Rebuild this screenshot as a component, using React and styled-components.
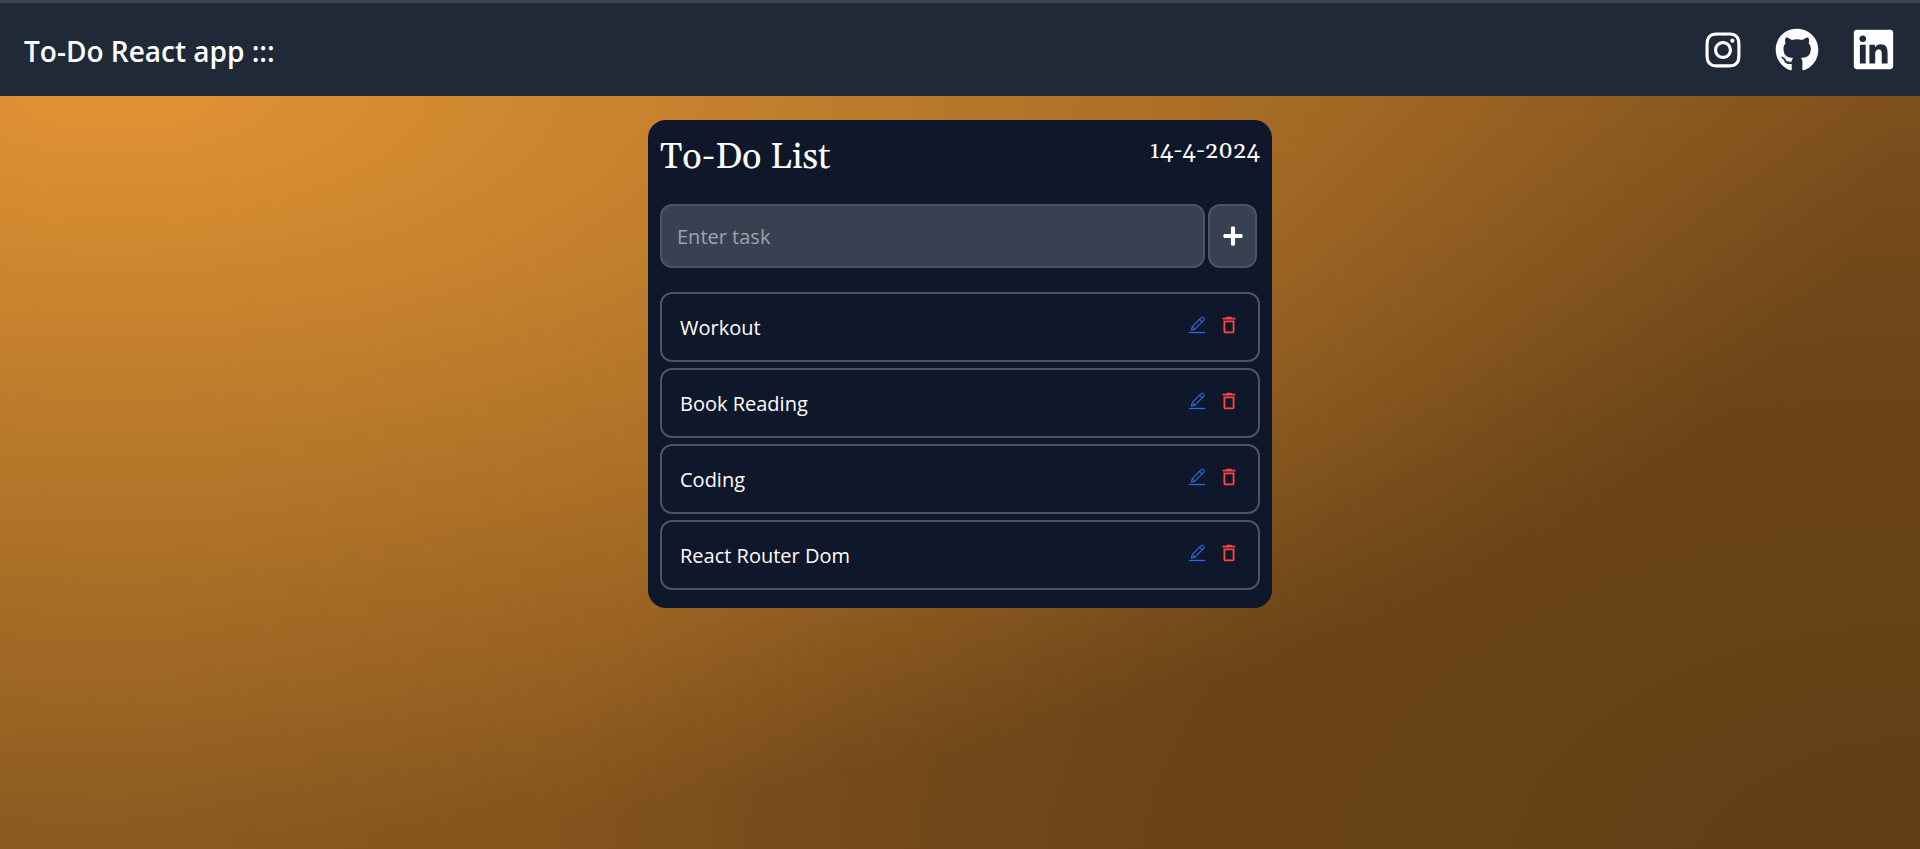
import React, { useState } from "react";
import styled, { createGlobalStyle } from "styled-components";
import { FaInstagram, FaGithub, FaLinkedin, FaPlus } from "react-icons/fa";
import { MdDeleteOutline } from "react-icons/md";

const GlobalStyle = createGlobalStyle`
  *, *::before, *::after { box-sizing: border-box; }
  body {
    margin: 0;
    min-height: 100vh;
    color: #fff;
    font-family: "Segoe UI", "Open Sans", "Noto Sans", sans-serif;
    background:
      radial-gradient(ellipse at 6% 10%, rgba(226, 148, 52, 1) 0%, rgba(226, 148, 52, 0) 70%) no-repeat,
      radial-gradient(78% 110% at 100% 104%, #5f3d15 0%, #664215 30%, #6b4417 54%, #764b1b 74%, #84541d 92%, #8a5a20 120%) no-repeat;
  }
`;

const Header = styled.header`
  display: flex;
  align-items: center;
  justify-content: space-between;
  height: 96px;
  padding: 0 24px;
  background: #1f2937;
  border-top: 3px solid #434349;
`;

const Brand = styled.h1`
  margin: 0;
  padding-top: 2px;
  font-size: 28px;
  line-height: 36px;
  font-weight: 600;
`;

const Socials = styled.nav`
  display: flex;
  align-items: center;
  gap: 32px;
`;

const SocialLink = styled.a`
  display: flex;
  color: #fff;
`;

const Card = styled.main`
  width: 624px;
  max-width: 100%;
  margin: 24px auto;
  padding: 14px 12px 18px;
  border-radius: 18px;
  background: #0f172a;
`;

const CardHead = styled.div`
  display: flex;
  justify-content: space-between;
  font-family: Georgia, Gelasio, "DejaVu Serif", "Liberation Serif", serif;
`;

const Title = styled.h2`
  margin: 0;
  font-size: 36px;
  line-height: 48px;
  font-weight: 400;
`;

const Today = styled.time`
  font-size: 24px;
  line-height: 34px;
`;

const Form = styled.form`
  display: flex;
  gap: 3px;
  margin: 22px 3px 24px 0;
`;

const TaskInput = styled.input`
  flex: 1;
  min-width: 0;
  height: 64px;
  padding: 0 15px;
  border: 2px solid #4b5563;
  border-radius: 12px;
  background: #374151;
  color: #fff;
  font-family: inherit;
  font-size: 20px;
  &::placeholder { color: #9ca3af; opacity: 1; }
`;

const AddButton = styled.button`
  display: flex;
  align-items: center;
  justify-content: center;
  width: 49px;
  padding: 0;
  border: 2px solid #4b5563;
  border-radius: 12px;
  background: #374151;
  color: #fff;
`;

const List = styled.ul`
  display: flex;
  flex-direction: column;
  gap: 6px;
  margin: 0;
  padding: 0;
  list-style: none;
`;

const Task = styled.li`
  display: flex;
  align-items: center;
  justify-content: space-between;
  height: 70px;
  padding: 0 18px;
  border: 2px solid #4b5563;
  border-radius: 12px;
  font-size: 20px;
`;

const Actions = styled.div`
  display: flex;
  align-items: center;
  gap: 12px;
  padding-bottom: 4px;
`;

const IconButton = styled.button`
  display: flex;
  padding: 0;
  border: 0;
  background: none;
  color: ${(p) => p.$color};
`;

function PencilIcon() {
  return (
    <svg width="18" height="18" viewBox="0 0 18 18" fill="none" stroke="currentColor" strokeWidth="1.1" strokeLinejoin="round" aria-hidden="true">
      <path d="M3.4 14.2 4.3 10.6 13.2 1.7a1.3 1.3 0 0 1 1.9 0l.7.7a1.3 1.3 0 0 1 0 1.9L6.9 13.2Z" />
      <path d="M11.6 3.3 14.2 5.9M4.3 10.6 6.9 13.2" />
      <path d="M.8 16.5H17" strokeWidth="1.3" />
    </svg>
  );
}

const initial = ["Workout", "Book Reading", "Coding", "React Router Dom"];

export default function App() {
  const [tasks, setTasks] = useState(initial);
  const [text, setText] = useState("");
  const add = (e) => {
    e.preventDefault();
    if (text.trim()) setTasks([...tasks, text.trim()]);
    setText("");
  };
  return (
    <>
      <GlobalStyle />
      <Header>
        <Brand>To-Do React app :::</Brand>
        <Socials>
          <SocialLink href="#instagram" aria-label="Instagram"><FaInstagram size={40} /></SocialLink>
          <SocialLink href="#github" aria-label="GitHub"><FaGithub size={44} /></SocialLink>
          <SocialLink href="#linkedin" aria-label="LinkedIn"><FaLinkedin size={45} /></SocialLink>
        </Socials>
      </Header>
      <Card>
        <CardHead>
          <Title>To-Do List</Title>
          <Today dateTime="2024-04-14">14-4-2024</Today>
        </CardHead>
        <Form onSubmit={add}>
          <TaskInput aria-label="Task" placeholder="Enter task" value={text} onChange={(e) => setText(e.target.value)} />
          <AddButton type="submit" aria-label="Add task"><FaPlus size={22} /></AddButton>
        </Form>
        <List>
          {tasks.map((task, i) => (
            <Task key={i}>
              <span>{task}</span>
              <Actions>
                <IconButton type="button" $color="#2f6be0" aria-label={"Edit " + task}><PencilIcon /></IconButton>
                <IconButton type="button" $color="#ff4444" aria-label={"Delete " + task} onClick={() => setTasks(tasks.filter((_, n) => n !== i))}><MdDeleteOutline size={22} /></IconButton>
              </Actions>
            </Task>
          ))}
        </List>
      </Card>
    </>
  );
}
